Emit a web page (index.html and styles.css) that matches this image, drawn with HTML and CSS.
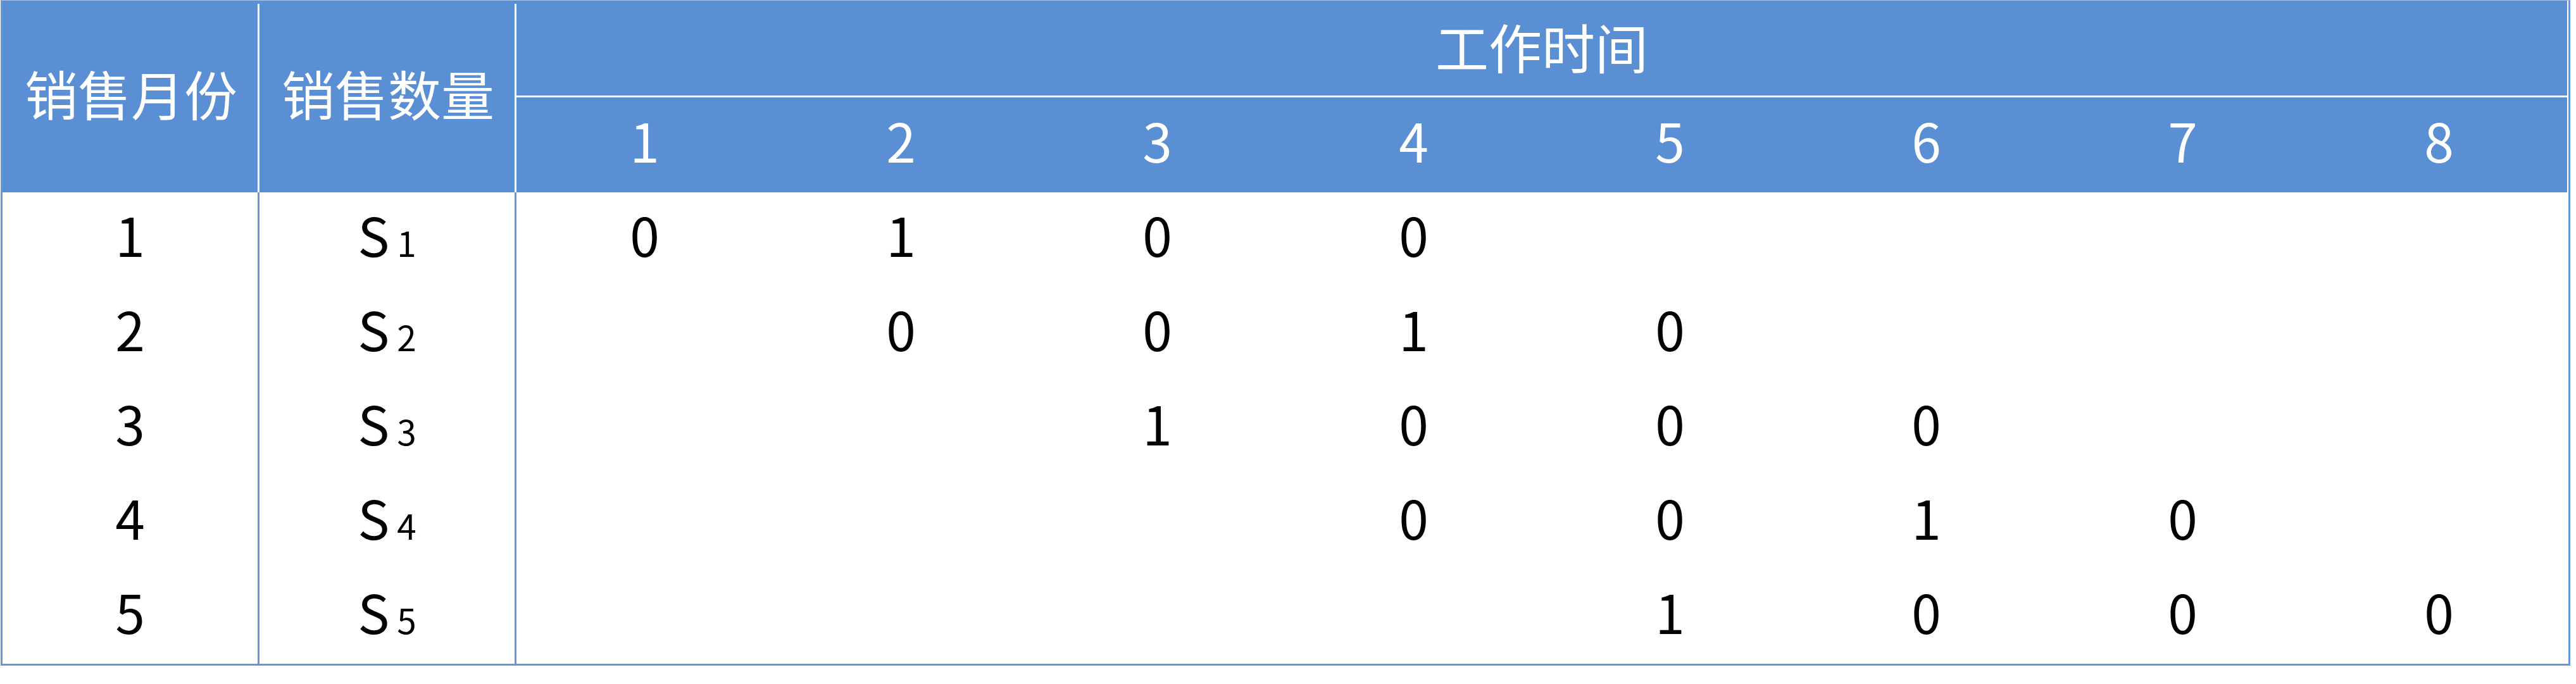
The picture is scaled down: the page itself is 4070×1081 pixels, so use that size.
FILE: index.html
```html
<!DOCTYPE html>
<html lang="zh-CN">
<head>
<meta charset="utf-8">
<title>销售数量与工作时间</title>
<link rel="stylesheet" href="styles.css">
</head>
<body>
<div class="sheet">
  <div class="hd hd-main sep">销售月份</div>
  <div class="hd hd-main sep">销售数量</div>
  <div class="hd hd-group">工作时间</div>
  <div class="hd hd-num">1</div>
  <div class="hd hd-num">2</div>
  <div class="hd hd-num">3</div>
  <div class="hd hd-num">4</div>
  <div class="hd hd-num">5</div>
  <div class="hd hd-num">6</div>
  <div class="hd hd-num">7</div>
  <div class="hd hd-num">8</div>

  <div class="cell sep">1</div><div class="cell sep"><span class="sv">S<span class="sub">1</span></span></div>
  <div class="cell">0</div><div class="cell">1</div><div class="cell">0</div><div class="cell">0</div><div class="cell"></div><div class="cell"></div><div class="cell"></div><div class="cell"></div>

  <div class="cell sep">2</div><div class="cell sep"><span class="sv">S<span class="sub">2</span></span></div>
  <div class="cell"></div><div class="cell">0</div><div class="cell">0</div><div class="cell">1</div><div class="cell">0</div><div class="cell"></div><div class="cell"></div><div class="cell"></div>

  <div class="cell sep">3</div><div class="cell sep"><span class="sv">S<span class="sub">3</span></span></div>
  <div class="cell"></div><div class="cell"></div><div class="cell">1</div><div class="cell">0</div><div class="cell">0</div><div class="cell">0</div><div class="cell"></div><div class="cell"></div>

  <div class="cell sep">4</div><div class="cell sep"><span class="sv">S<span class="sub">4</span></span></div>
  <div class="cell"></div><div class="cell"></div><div class="cell"></div><div class="cell">0</div><div class="cell">0</div><div class="cell">1</div><div class="cell">0</div><div class="cell"></div>

  <div class="cell sep">5</div><div class="cell sep"><span class="sv">S<span class="sub">5</span></span></div>
  <div class="cell"></div><div class="cell"></div><div class="cell"></div><div class="cell"></div><div class="cell">1</div><div class="cell">0</div><div class="cell">0</div><div class="cell">0</div>
</div>
</body>
</html>
```

FILE: styles.css
```css
html, body {
  margin: 0;
  padding: 0;
  background: #ffffff;
}

body {
  font-family: "Noto Sans CJK SC", "Noto Sans", sans-serif;
}

.sheet {
  box-sizing: border-box;
  width: 4060px;
  margin-left: 1px;
  border-top: 1px solid #a9c3e8;
  border-left: 3px solid #6797d9;
  border-right: 3px solid #6797d9;
  border-bottom: 3px solid #6797d9;
  display: grid;
  grid-template-columns: 406px 406px repeat(8, 405px);
  grid-template-rows: 153px 150px repeat(5, 149px);
}

.hd {
  box-sizing: border-box;
  background-color: #5b8fd4;
  color: #ffffff;
  font-size: 84px;
  line-height: 1;
  display: flex;
  align-items: center;
  justify-content: center;
}

.hd-main {
  grid-row: span 2;
  padding-bottom: 12px;
}

.hd.sep {
  background-image: linear-gradient(#ffffff, #ffffff);
  background-size: 3px calc(100% - 5px);
  background-position: right bottom;
  background-repeat: no-repeat;
}

.hd-group {
  grid-column: span 8;
  border-bottom: 3px solid #ffffff;
  padding-bottom: 6px;
}

.hd-num {
  padding-bottom: 16px;
}

.cell {
  box-sizing: border-box;
  color: #000000;
  font-size: 84px;
  line-height: 1;
  display: flex;
  align-items: center;
  justify-content: center;
  padding-bottom: 17px;
}

.cell.sep {
  border-right: 3px solid #6797d9;
}

.sv {
  white-space: nowrap;
}

.sub {
  font-size: 55px;
  margin-left: 12px;
}
```
